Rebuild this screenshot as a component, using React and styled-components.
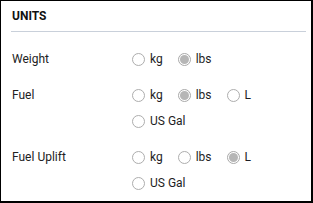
import React from "react";
import styled, { createGlobalStyle } from "styled-components";

const Global = createGlobalStyle`
  html, body { margin: 0; padding: 0; background: #fff; }
  body { font-family: Roboto, "Liberation Sans", Arial, sans-serif; }
`;

const Panel = styled.section`
  box-sizing: border-box;
  width: 313px;
  height: 203px;
  border-style: solid;
  border-color: #000;
  border-width: 1px 2px 2px 1px;
  padding: 0 5px 0 10px;
  background: #fff;
`;

const Header = styled.h2`
  margin: 0;
  padding: 7px 0 7px 1px;
  font-size: 12px;
  line-height: 16px;
  font-weight: 700;
  color: #111;
  border-bottom: 1px solid #c9d0da;
`;

const List = styled.div`
  display: flex;
  flex-direction: column;
  gap: 10px;
  padding-top: 14px;
`;

const Row = styled.div`
  display: grid;
  grid-template-columns: 121px 1fr;
  align-items: start;
`;

const Label = styled.div`
  font-size: 12px;
  line-height: 26px;
  color: #222;
  padding-left: 1px;
`;

const Options = styled.div`
  display: flex;
  flex-wrap: wrap;
`;

const Option = styled.label`
  display: flex;
  align-items: center;
  height: 26px;
  margin-right: 15px;
  font-size: 12px;
  color: #1d1d24;
  gap: 5px;
`;

const Circle = styled.span`
  box-sizing: border-box;
  position: relative;
  width: 13px;
  height: 13px;
  border-radius: 50%;
  border: 1px solid ${(p) => (p.$checked ? "#a9a9a9" : "#adadad")};
  background: #fff;
  &::after {
    content: "";
    display: ${(p) => (p.$checked ? "block" : "none")};
    position: absolute;
    inset: 1px;
    border-radius: 50%;
    background: #b6b6b6;
  }
`;

const rows = [
  { label: "Weight", options: ["kg", "lbs"], checked: "lbs" },
  { label: "Fuel", options: ["kg", "lbs", "L", "US Gal"], checked: "lbs" },
  { label: "Fuel Uplift", options: ["kg", "lbs", "L", "US Gal"], checked: "L" },
];

export default function App() {
  return (
    <>
      <Global />
      <Panel>
        <Header>UNITS</Header>
        <List>
          {rows.map((r) => (
            <Row key={r.label}>
              <Label>{r.label}</Label>
              <Options>
                {r.options.map((o) => (
                  <Option key={o}>
                    <Circle $checked={o === r.checked} />
                    {o}
                  </Option>
                ))}
              </Options>
            </Row>
          ))}
        </List>
      </Panel>
    </>
  );
}
